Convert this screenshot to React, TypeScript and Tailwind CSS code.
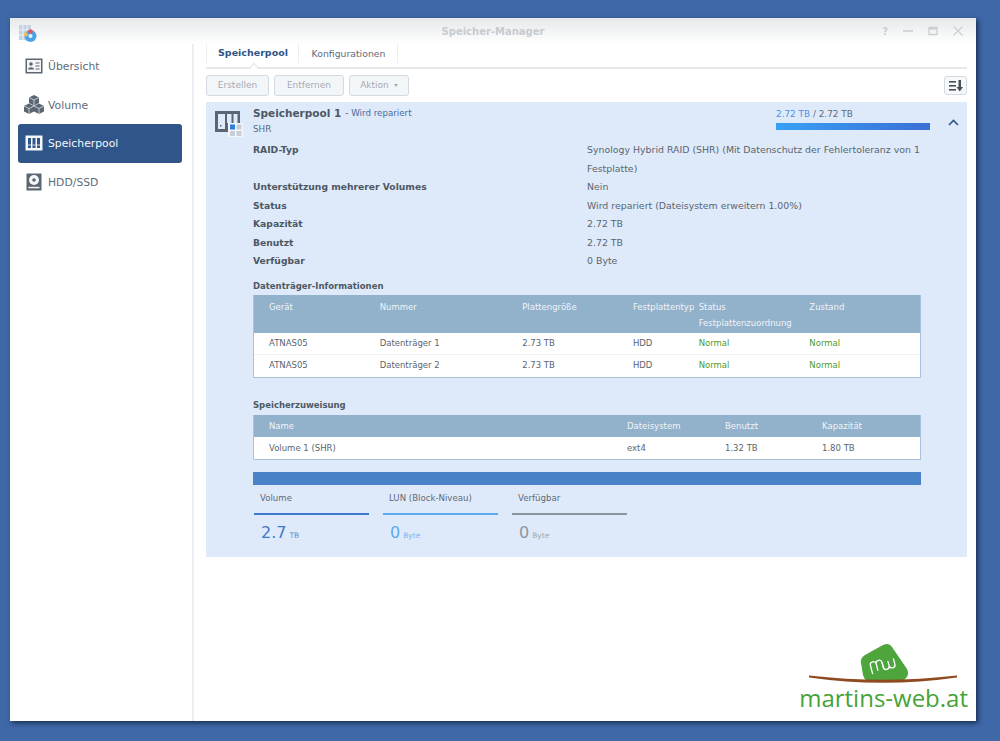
const font = "font-['DejaVu_Sans',sans-serif]";

function OverviewIcon() {
  return (
    <svg width="18" height="16" viewBox="0 0 18 16">
      <rect x="0.5" y="0.5" width="17" height="15" fill="#5b6673" />
      <rect x="2" y="2" width="14" height="12" fill="#f4f6f8" />
      <circle cx="6" cy="6" r="1.8" fill="#5b6673" />
      <path d="M3 11.5c0-3 6-3 6 0z" fill="#5b6673" />
      <path d="M10.5 5h4M10.5 8h4M10.5 11h4" stroke="#5b6673" strokeWidth="1.2" />
    </svg>
  );
}

function VolumeIcon() {
  return (
    <svg width="20" height="19" viewBox="0 0 20 19" fill="#5b6673">
      <path d="M10 0l5 2.500v5.500l-5 2.500-5-2.500V2.500z" />
      <path d="M5 8.500l5 2.500v5.500l-5 2.500-5-2.500V11z" />
      <path d="M15 8.500l5 2.500v5.500l-5 2.500-5-2.500V11z" />
      <path d="M5 2.500l5 2.500 5-2.500M10 5v5.500M0 11l5 2.500 5-2.500M5 13.500V19M10 11l5 2.500 5-2.500M15 13.500V19" stroke="#f0f3f6" strokeWidth="0.7" fill="none" />
    </svg>
  );
}

function PoolIcon() {
  return (
    <svg width="18" height="16" viewBox="0 0 18 16">
      <rect x="0.5" y="0.5" width="17" height="15" fill="#f5f7fa" />
      <rect x="3" y="3" width="3" height="10" fill="#2f5589" />
      <rect x="7.500" y="3" width="3" height="10" fill="#2f5589" />
      <rect x="12" y="3" width="3" height="10" fill="#2f5589" />
      <path d="M3 10h3M7.500 10h3M12 10h3" stroke="#f5f7fa" strokeWidth="0.8" />
    </svg>
  );
}

function DiskIcon() {
  return (
    <svg width="16" height="18" viewBox="0 0 16 18">
      <rect x="0.500" y="0.500" width="15" height="17" fill="#5b6673" />
      <circle cx="8" cy="7" r="5" fill="#f4f6f8" />
      <circle cx="8" cy="7" r="1.800" fill="#5b6673" />
      <rect x="2.500" y="13.800" width="11" height="1.500" fill="#f4f6f8" />
    </svg>
  );
}

function BigPoolIcon() {
  return (
    <svg width="28" height="26" viewBox="0 0 28 26" className="shrink-0">
      <rect x="0" y="0" width="25" height="21" fill="#5b6673" />
      <rect x="3" y="3" width="7" height="15" fill="#dfeafa" />
      <rect x="12" y="3" width="4.500" height="9" fill="#dfeafa" />
      <rect x="18.500" y="3" width="4" height="9" fill="#dfeafa" />
      <rect x="5" y="14" width="1.500" height="1.500" fill="#5b6673" />
      <rect x="13" y="12" width="15" height="14" fill="#f4f7fb" />
      <rect x="15" y="13.500" width="5" height="5" fill="#2f7be0" />
      <rect x="21.500" y="13.500" width="5" height="5" fill="#c8ced6" />
      <rect x="15" y="20" width="5" height="5" fill="#c8ced6" />
      <rect x="21.500" y="20" width="5" height="5" fill="#c8ced6" />
    </svg>
  );
}

function AppIcon() {
  return (
    <svg width="18" height="18" viewBox="0 0 18 18" className="mt-[5px] shrink-0">
      <rect x="0" y="0" width="12" height="15" fill="#c6d2e2" />
      <path d="M4 0v15M8 0v15M0 5h12M0 10h12" stroke="#e9eef5" strokeWidth="1" />
      <circle cx="11.500" cy="11" r="6" fill="#4da3e8" />
      <circle cx="11.500" cy="11" r="2" fill="#e8f3fc" />
      <circle cx="11.500" cy="6.500" r="2.200" fill="#e5574f" />
      <circle cx="7" cy="9.500" r="2" fill="#f1c04a" />
    </svg>
  );
}

function NavItem({ icon, label, active }: { icon: React.ReactNode; label: string; active?: boolean }) {
  return (
    <div
      className={
        active
          ? "flex h-[38.500px] items-center rounded-[3px] bg-[#2f5589] text-[#f5f8fc]"
          : "flex h-[38.500px] items-center rounded-[3px] text-[#5f6b78]"
      }
    >
      <div className="flex w-[30px] justify-center pl-[2px]">{icon}</div>
      <span className="pt-[2px] text-[10.800px]">{label}</span>
    </div>
  );
}

function Btn({ children, className }: { children: React.ReactNode; className: string }) {
  return (
    <div className={"flex h-[21px] items-center justify-center rounded-[3px] border border-[#d4dae2] bg-[#f3f6f9] text-[9px] text-[#a4abb5] " + className}>
      {children}
    </div>
  );
}

function InfoRow({ label, value }: { label: string; value: string }) {
  return (
    <div className="flex h-[18.500px] items-center">
      <div className="w-[334px] shrink-0 text-[9.200px] font-bold text-[#4e5863]">{label}</div>
      <div className="text-[9.400px] text-[#5a6570]">{value}</div>
    </div>
  );
}

const diskCols = ["w-[111px]", "w-[143px]", "w-[111px]", "w-[66px]", "w-[111px]", "w-[111px]"];

function DiskRow({ name }: { name: string }) {
  const values = ["ATNAS05", name, "2.73 TB", "HDD"];
  return (
    <div className="flex h-[22px] items-center border-b border-[#edf1f5] bg-white pl-[15px] text-[8.500px] text-[#5a6570] last:border-b-0">
      {values.map((v, i) => (
        <div key={i} className={diskCols[i]}>
          {v}
        </div>
      ))}
      <div className="w-[111px] text-[#4f9a2a]">Normal</div>
      <div className="w-[111px] text-[#4f9a2a]">Normal</div>
    </div>
  );
}

function Stat({ label, value, unit, line, color, unitColor }: { label: string; value: string; unit: string; line: string; color: string; unitColor: string }) {
  return (
    <div className="w-[115px]">
      <div className="flex h-[28px] items-center pl-[6px] text-[8.600px] text-[#5f6b78]">{label}</div>
      <div className={"h-[2px] " + line} />
      <div className="flex h-[35px] items-baseline gap-[3px] pl-[7px] pt-[6px]">
        <span className={"text-[16px] " + color}>{value}</span>
        <span className={"text-[7.500px] " + unitColor}>{unit}</span>
      </div>
    </div>
  );
}

export default function App() {
  return (
    <div className={"h-[741px] w-[1000px] overflow-hidden bg-[#3f68a8] pl-[10px] pt-[18px] " + font}>
      <div className="relative flex h-[703px] w-[966px] flex-col bg-white shadow-[2px_2px_5px_rgba(10,25,55,0.75)]">
        <div className="flex h-[26px] shrink-0 items-center bg-gradient-to-b from-[#e6e8ea] to-white px-[9px]">
          <div className="w-[100px]">
            <AppIcon />
          </div>
          <div className="flex-1 text-center text-[10px] font-bold text-[#c6cbd0]">Speicher-Manager</div>
          <div className="flex w-[100px] items-center justify-end gap-[15px] pr-[4px] text-[#c9ced3]">
            <span className="text-[10px] font-bold">?</span>
            <svg width="10" height="10" viewBox="0 0 10 10"><path d="M0 5h10" stroke="currentColor" strokeWidth="1.500" /></svg>
            <svg width="10" height="10" viewBox="0 0 10 10"><path d="M1 1.500h8v7H1z" fill="none" stroke="currentColor" strokeWidth="1.300" /><path d="M1 2.500h8" stroke="currentColor" strokeWidth="2" /></svg>
            <svg width="10" height="10" viewBox="0 0 10 10"><path d="M0.500 0.500l9 9M9.500 0.500l-9 9" stroke="currentColor" strokeWidth="1.200" /></svg>
          </div>
        </div>

        <div className="flex flex-1">
          <div className="w-[184px] shrink-0 border-r-2 border-[#eceef1] pl-[8px] pr-[10px] pt-[3px]">
            <NavItem icon={<OverviewIcon />} label="Übersicht" />
            <NavItem icon={<VolumeIcon />} label="Volume" />
            <NavItem icon={<PoolIcon />} label="Speicherpool" active />
            <NavItem icon={<DiskIcon />} label="HDD/SSD" />
          </div>

          <div className="flex-1 pl-[12px] pr-[9px]">
            <div className="flex h-[25px] border-b-2 border-[#e6e8eb]">
              <div className="relative flex h-[19px] w-[93px] items-center justify-center border-x border-[#eceef1] pl-[1px] text-[9.500px] font-bold text-[#2f5589]">
                Speicherpool
                <div className="absolute -bottom-[7px] left-[44px] size-[6px] rotate-45 border-l border-t border-[#e0e3e7] bg-white" />
              </div>
              <div className="flex h-[19px] w-[99px] items-center justify-center border-r border-[#eceef1] pl-[1px] text-[9.300px] text-[#5f6b78]">Konfigurationen</div>
            </div>

            <div className="flex items-start pt-[6px]">
              <div className="flex gap-[5px]">
                <Btn className="w-[63px]">Erstellen</Btn>
                <Btn className="w-[70px]">Entfernen</Btn>
                <Btn className="w-[60px] gap-[5px]">
                  Aktion
                  <span className="border-x-[2.500px] border-t-[3px] border-x-transparent border-t-[#a4abb5]" />
                </Btn>
              </div>
              <div className="ml-auto mt-[1px] flex h-[19px] w-[23px] items-center justify-center rounded-[3px] border border-[#d4dae2] bg-[#f6f8fa]">
                <svg width="14" height="12" viewBox="0 0 14 12" fill="#46505c">
                  <rect x="0" y="1" width="7" height="1.600" />
                  <rect x="0" y="5" width="7" height="1.600" />
                  <rect x="0" y="9" width="7" height="1.600" />
                  <path d="M9.500 0h2.500v7h2l-3.250 4.500L7.500 7h2z" />
                </svg>
              </div>
            </div>

            <div className="mt-[6px] h-[455px] bg-[#deeafa]">
              <div className="flex h-[39px]">
                <div className="pl-[9px] pt-[9px]"><BigPoolIcon /></div>
                <div className="pl-[10px] pt-[4px]">
                  <div className="flex h-[15px] items-center gap-[4px] text-[#4e5863]">
                    <span className="text-[10.500px] font-bold">Speicherpool 1</span>
                    <span className="text-[8.700px] text-[#4a6a9a]"><span className="text-[#4e5863]">-</span> Wird repariert</span>
                  </div>
                  <div className="mt-[2px] text-[8.800px] text-[#5f6b78]">SHR</div>
                </div>
                <div className="ml-auto w-[154px] pt-[6px]">
                  <div className="text-[8.900px] text-[#5f6b78]"><span className="text-[#4f90e4]">2.72 TB</span> / 2.72 TB</div>
                  <div className="mt-[2px] h-[7px] bg-gradient-to-r from-[#38a0f6] to-[#3a6fd6]" />
                </div>
                <div className="flex w-[37px] justify-end pr-[8px] pt-[17px]">
                  <svg width="11" height="7" viewBox="0 0 11 7"><path d="M1 6l4.500-4.500L10 6" fill="none" stroke="#2f5589" strokeWidth="1.600" /></svg>
                </div>
              </div>

              <div className="pl-[47px] pr-[45px]">
                <div className="flex">
                  <div className="w-[334px] shrink-0 pt-[2px] text-[9.200px] font-bold text-[#4e5863]">RAID-Typ</div>
                  <div className="text-[9.400px] leading-[18.500px] text-[#5a6570]">
                    Synology Hybrid RAID (SHR) (Mit Datenschutz der Fehlertoleranz von 1
                    <br />
                    Festplatte)
                  </div>
                </div>
                <InfoRow label="Unterstützung mehrerer Volumes" value="Nein" />
                <InfoRow label="Status" value="Wird repariert (Dateisystem erweitern 1.00%)" />
                <InfoRow label="Kapazität" value="2.72 TB" />
                <InfoRow label="Benutzt" value="2.72 TB" />
                <InfoRow label="Verfügbar" value="0 Byte" />

                <div className="mt-[9px] flex h-[14px] items-center text-[8.500px] font-bold text-[#4e5863]">Datenträger-Informationen</div>
                <div className="mt-[1px] w-[668px] border-x border-b border-[#a9c2da]">
                  <div className="flex h-[38px] bg-[#92b1cb] pl-[15px] pt-[6px] text-[8.500px] text-[#f0f4f8]">
                    <div className={diskCols[0]}>Gerät</div>
                    <div className={diskCols[1]}>Nummer</div>
                    <div className={diskCols[2]}>Plattengröße</div>
                    <div className={diskCols[3]}>Festplattentyp</div>
                    <div className="-mt-[2px] w-[111px] leading-[16px]">Status<br />Festplattenzuordnung</div>
                    <div className="w-[111px]">Zustand</div>
                  </div>
                  <DiskRow name="Datenträger 1" />
                  <DiskRow name="Datenträger 2" />
                </div>

                <div className="mt-[21px] flex h-[14px] items-center text-[8.500px] font-bold text-[#4e5863]">Speicherzuweisung</div>
                <div className="mt-[2px] w-[668px] border-x border-b border-[#a9c2da]">
                  <div className="flex h-[22px] items-center bg-[#92b1cb] pl-[15px] pt-[1px] text-[8.500px] text-[#f0f4f8]">
                    <div className="w-[358px]">Name</div>
                    <div className="w-[98px]">Dateisystem</div>
                    <div className="w-[97px]">Benutzt</div>
                    <div>Kapazität</div>
                  </div>
                  <div className="flex h-[22px] items-center bg-white pl-[15px] pt-[1px] text-[8.500px] text-[#5a6570]">
                    <div className="w-[358px]">Volume 1 (SHR)</div>
                    <div className="w-[98px]">ext4</div>
                    <div className="w-[97px]">1.32 TB</div>
                    <div>1.80 TB</div>
                  </div>
                </div>

                <div className="mt-[12px] h-[13px] w-[668px] bg-[#4a82c8]" />
                <div className="flex gap-[14px] pl-[1px]">
                  <Stat label="Volume" value="2.7" unit="TB" line="bg-[#3f78c8]" color="text-[#3f78c8]" unitColor="text-[#5f8fd0]" />
                  <Stat label="LUN (Block-Niveau)" value="0" unit="Byte" line="bg-[#5aaaf2]" color="text-[#5aaaf2]" unitColor="text-[#7ab4ee]" />
                  <Stat label="Verfügbar" value="0" unit="Byte" line="bg-[#8c959e]" color="text-[#8c959e]" unitColor="text-[#a0a8b0]" />
                </div>
              </div>
            </div>
          </div>
        </div>

        <div className="absolute bottom-[9px] right-[8px] flex flex-col items-center">
          <svg width="150" height="44" viewBox="0 0 150 44" className="-mb-[1px]">
            <path d="M56 14L74 4Q80 1 83 6L98 28Q100 32 98 36L94 40H58Q55 38 54 34L52 22Q51 17 56 14z" fill="#4da53c" />
            <g transform="rotate(-15 75 25)" fill="none" stroke="#fff" strokeWidth="1.300">
              <path d="M62 30V21q0-3 3-3t3 3V28M68 21q0-3 3-3t3 3V28" />
              <path d="M74 21v5q0 3 3 3t3-3v-5M80 26q0 3 3 3t3-3v-6" />
            </g>
            <path d="M0 34.500Q74 43 148 34.500L148 36.500Q74 47 0 36.500z" fill="#8f4a1f" />
          </svg>
          <div className="whitespace-nowrap font-['Open_Sans',sans-serif] text-[24px] leading-[28px] text-[#46a338]">martins-web.at</div>
        </div>
      </div>
    </div>
  );
}
